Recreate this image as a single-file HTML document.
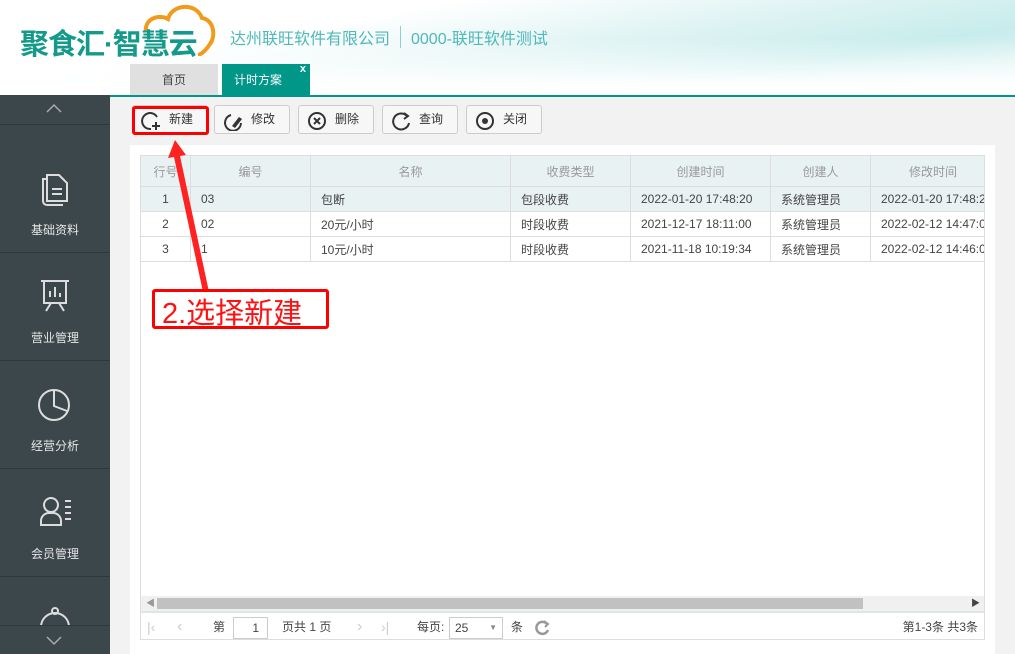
<!DOCTYPE html>
<html><head><meta charset="utf-8"><style>
*{margin:0;padding:0;box-sizing:border-box}
body{width:1015px;height:654px;overflow:hidden;position:relative;font-family:"Liberation Sans","Noto Sans CJK SC",sans-serif;font-size:12px;color:#333;background:#f2f2f2}
.hdr{position:absolute;left:0;top:0;width:1015px;height:95px;background:linear-gradient(170deg,#ffffff 0%,#ffffff 30%,#dff3f3 55%,#c8ecec 75%,#e6f6f6 100%)}
.hdr2{position:absolute;left:0;top:0;width:1015px;height:95px;background:linear-gradient(to bottom,rgba(255,255,255,0) 0%,rgba(255,255,255,0) 40%,#fff 90%)}
.logo{position:absolute;left:20px;top:21px;font-size:29px;color:#139a8a;font-weight:bold;letter-spacing:-1px}
.co{position:absolute;left:230px;top:25px;font-size:16px;color:#4fb8b8}
.sep{position:absolute;left:400px;top:26px;width:1px;height:22px;background:#8fd0d0}
.co2{position:absolute;left:411px;top:25px;font-size:16px;color:#4fb8b8}
.tab{position:absolute;top:64px;height:31px;line-height:33px;text-align:center;font-size:12px}
.line{position:absolute;left:110px;top:95px;width:905px;height:2px;background:#009688}
.side{position:absolute;left:0;top:95px;width:110px;height:559px;background:#3c474c}
.sitem{position:absolute;left:0;width:110px;height:108px;border-bottom:1px solid #2f383c;color:#e6e6e6;text-align:center;font-size:12px}
.sitem svg{position:absolute;left:37px;top:18px}
.sitem span{position:absolute;left:0;right:0;top:74px}
.btn{position:absolute;top:105px;height:29px;border:1px solid #ccc;border-radius:3px;background:#f7f7f7;font-size:12px;line-height:27px}
.btn svg{position:absolute;left:8px;top:5px}
.btn span{position:absolute;left:36px}
.panel{position:absolute;left:130px;top:145px;width:865px;height:509px;background:#fff}
.grid{position:absolute;left:140px;top:155px;width:845px;height:485px;border:1px solid #ddd;background:#fff;overflow:hidden}
table{border-collapse:collapse;position:absolute;left:-1px;top:-1px;table-layout:fixed}
td{border:1px solid #ddd;height:25px;white-space:nowrap;overflow:hidden;padding-left:10px;font-size:12px;color:#444}
tr.h td{height:31px;background:#e9f2f2;color:#999;text-align:center;padding:0}
tr.sel td{background:#e9f2f2}
td.n{text-align:center;padding:0}
.red{position:absolute;border:3px solid #f00;border-radius:3px}
</style></head><body>
<div class="hdr"></div><div class="hdr2"></div>
<svg style="position:absolute;left:138px;top:2px" width="80" height="54"><path d="M8 30 C6 16 22 12 30 17 C34 2 58 0 64 16 C76 18 78 34 72 42 C68 48 64 52 60 53" fill="none" stroke="#f29a1a" stroke-width="4"/></svg>
<div class="logo">聚食汇·智慧云</div>
<div class="co">达州联旺软件有限公司</div><div class="sep"></div><div class="co2">0000-联旺软件测试</div>
<div class="tab" style="left:130px;width:88px;background:#e0e0e0;color:#444">首页</div>
<div class="tab" style="left:222px;width:88px;background:#009688;color:#fff;text-align:left;padding-left:12px">计时方案<span style="position:absolute;right:4px;top:-11px;font-size:11px;font-weight:bold">x</span></div>
<div class="line"></div>
<div class="side">
<div style="position:absolute;left:0;top:0;width:110px;height:30px;border-bottom:1px solid #2f383c"><svg style="position:absolute;left:46px;top:8px" width="16" height="10"><path d="M1 9 L8 2 L15 9" fill="none" stroke="#aaa" stroke-width="1.5"/></svg></div>
<div class="sitem" style="top:30px;height:128px"><svg style="top:44px" width="36" height="40"><path d="M10 6 h12 l8 8 v18 h-20z M10 10 h-4 v22 a4 4 0 0 0 4 4 h16" fill="none" stroke="#ddd" stroke-width="2"/><path d="M15 20h10M15 25h10" stroke="#ddd" stroke-width="2"/></svg><span style="top:96px">基础资料</span></div>
<div class="sitem" style="top:158px"><svg style="top:24px" width="36" height="40"><path d="M4 4h28M7 4v22h22v-22M14 26l-5 8M22 26l5 8M13 20v-6M18 20v-10M23 20v-4" fill="none" stroke="#ddd" stroke-width="2"/></svg><span style="top:76px">营业管理</span></div>
<div class="sitem" style="top:266px"><svg style="top:26px" width="36" height="40"><circle cx="17" cy="18" r="15" fill="none" stroke="#ddd" stroke-width="2"/><path d="M17 3v16l13 5" fill="none" stroke="#ddd" stroke-width="2"/></svg><span style="top:76px">经营分析</span></div>
<div class="sitem" style="top:374px"><svg style="top:26px" width="40" height="40"><circle cx="14" cy="10" r="7" fill="none" stroke="#ddd" stroke-width="2"/><path d="M4 30 v-4 a8 8 0 0 1 8-8 h4 a8 8 0 0 1 8 8 v4z M28 6h6M28 12h6M28 18h6M28 24h6" fill="none" stroke="#ddd" stroke-width="2"/></svg><span style="top:76px">会员管理</span></div>
<div style="position:absolute;left:0;top:482px;width:110px;height:77px;overflow:hidden"><svg style="position:absolute;left:37px;top:28px" width="36" height="40"><circle cx="18" cy="22" r="14" fill="none" stroke="#ddd" stroke-width="2"/><circle cx="18" cy="6" r="3" fill="none" stroke="#ddd" stroke-width="2"/></svg></div>
<div style="position:absolute;left:0;top:530px;width:110px;height:29px;background:#3c474c;border-top:1px solid #2f383c"><svg style="position:absolute;left:46px;top:10px" width="16" height="10"><path d="M1 1 L8 8 L15 1" fill="none" stroke="#aaa" stroke-width="1.5"/></svg></div>
</div>
<div class="panel"></div>
<div class="btn" style="left:132px;width:76px"><svg width="22" height="20"><path d="M16 6 A8 8 0 1 0 10 18" fill="none" stroke="#333" stroke-width="2"/><path d="M15 11v8M11 15h8" stroke="#333" stroke-width="2"/></svg><span>新建</span></div>
<div class="btn" style="left:214px;width:76px"><svg width="22" height="20"><path d="M8 4 A8 8 0 1 0 18 12" fill="none" stroke="#333" stroke-width="2"/><path d="M9 15l7-9 3 2-7 9z" fill="#333"/></svg><span>修改</span></div>
<div class="btn" style="left:298px;width:76px"><svg width="22" height="20"><circle cx="10" cy="10" r="8" fill="none" stroke="#333" stroke-width="2"/><path d="M7 7l6 6M13 7l-6 6" stroke="#333" stroke-width="2"/></svg><span>删除</span></div>
<div class="btn" style="left:382px;width:76px"><svg width="22" height="20"><path d="M16 5 A8 8 0 1 0 18 12" fill="none" stroke="#333" stroke-width="2"/><path d="M13 2l4 3-4 3" fill="none" stroke="#333" stroke-width="2"/></svg><span>查询</span></div>
<div class="btn" style="left:466px;width:76px"><svg width="22" height="20"><circle cx="10" cy="10" r="8" fill="none" stroke="#333" stroke-width="2"/><circle cx="10" cy="10" r="3" fill="#333"/></svg><span>关闭</span></div>
<div class="red" style="left:132px;top:106px;width:77px;height:29px"></div>
<div class="grid">
<table style="width:855px">
<colgroup><col style="width:50px"><col style="width:120px"><col style="width:200px"><col style="width:120px"><col style="width:140px"><col style="width:100px"><col style="width:125px"></colgroup>
<tr class="h"><td>行号</td><td>编号</td><td>名称</td><td>收费类型</td><td>创建时间</td><td>创建人</td><td>修改时间</td></tr>
<tr class="sel"><td class="n">1</td><td>03</td><td>包断</td><td>包段收费</td><td>2022-01-20 17:48:20</td><td>系统管理员</td><td>2022-01-20 17:48:20</td></tr>
<tr><td class="n">2</td><td>02</td><td>20元/小时</td><td>时段收费</td><td>2021-12-17 18:11:00</td><td>系统管理员</td><td>2022-02-12 14:47:00</td></tr>
<tr><td class="n">3</td><td>1</td><td>10元/小时</td><td>时段收费</td><td>2021-11-18 10:19:34</td><td>系统管理员</td><td>2022-02-12 14:46:00</td></tr>
</table>
<div style="position:absolute;left:0;top:440px;width:843px;height:15px;background:#f0f0f0"><div style="position:absolute;left:16px;top:2px;width:706px;height:11px;background:#c1c1c1"></div><span style="position:absolute;left:5px;top:0;font-size:9px;color:#999">◀</span><span style="position:absolute;right:4px;top:0;font-size:9px;color:#444">▶</span></div>
<div style="position:absolute;left:0;top:455px;width:843px;height:2px;background:#dde8e6"></div>
<div style="position:absolute;left:0;top:457px;width:843px;height:28px;font-size:12px;color:#444;line-height:28px">
<span style="position:absolute;left:6px;color:#ccc;font-size:14px">|‹</span><span style="position:absolute;left:36px;color:#ccc;font-size:16px">‹</span>
<span style="position:absolute;left:72px">第</span>
<span style="position:absolute;left:92px;top:4px;width:35px;height:22px;border:1px solid #ccc;text-align:right;padding-right:8px;line-height:20px">1</span>
<span style="position:absolute;left:141px">页共 1 页</span>
<span style="position:absolute;left:216px;color:#ccc;font-size:16px">›</span><span style="position:absolute;left:240px;color:#ccc;font-size:14px">›|</span>
<span style="position:absolute;left:276px">每页:</span>
<span style="position:absolute;left:308px;top:4px;width:54px;height:22px;border:1px solid #ccc;line-height:20px;padding-left:5px">25<span style="position:absolute;right:5px;font-size:8px;color:#888">▼</span></span>
<span style="position:absolute;left:370px">条</span>
<svg style="position:absolute;left:393px;top:7px" width="16" height="16"><path d="M13 4 A6 6 0 1 0 14 10" fill="none" stroke="#999" stroke-width="2.5"/><path d="M10 1l4 3-3 3" fill="none" stroke="#999" stroke-width="2"/></svg>
<span style="position:absolute;right:6px">第1-3条 共3条</span>
</div>
</div>
<svg style="position:absolute;left:0;top:0" width="1015" height="654"><path d="M175 140 L168 158 L174 157 L203 292 L209 292 L180 156 L186 155 Z" fill="#f22"/></svg>
<div class="red" style="left:152px;top:289px;width:177px;height:40px;background:#fff;border-width:3px"><span style="position:absolute;left:7px;top:-2px;font-size:29px;color:#f11;white-space:nowrap">2.选择新建</span></div>
</body></html>
